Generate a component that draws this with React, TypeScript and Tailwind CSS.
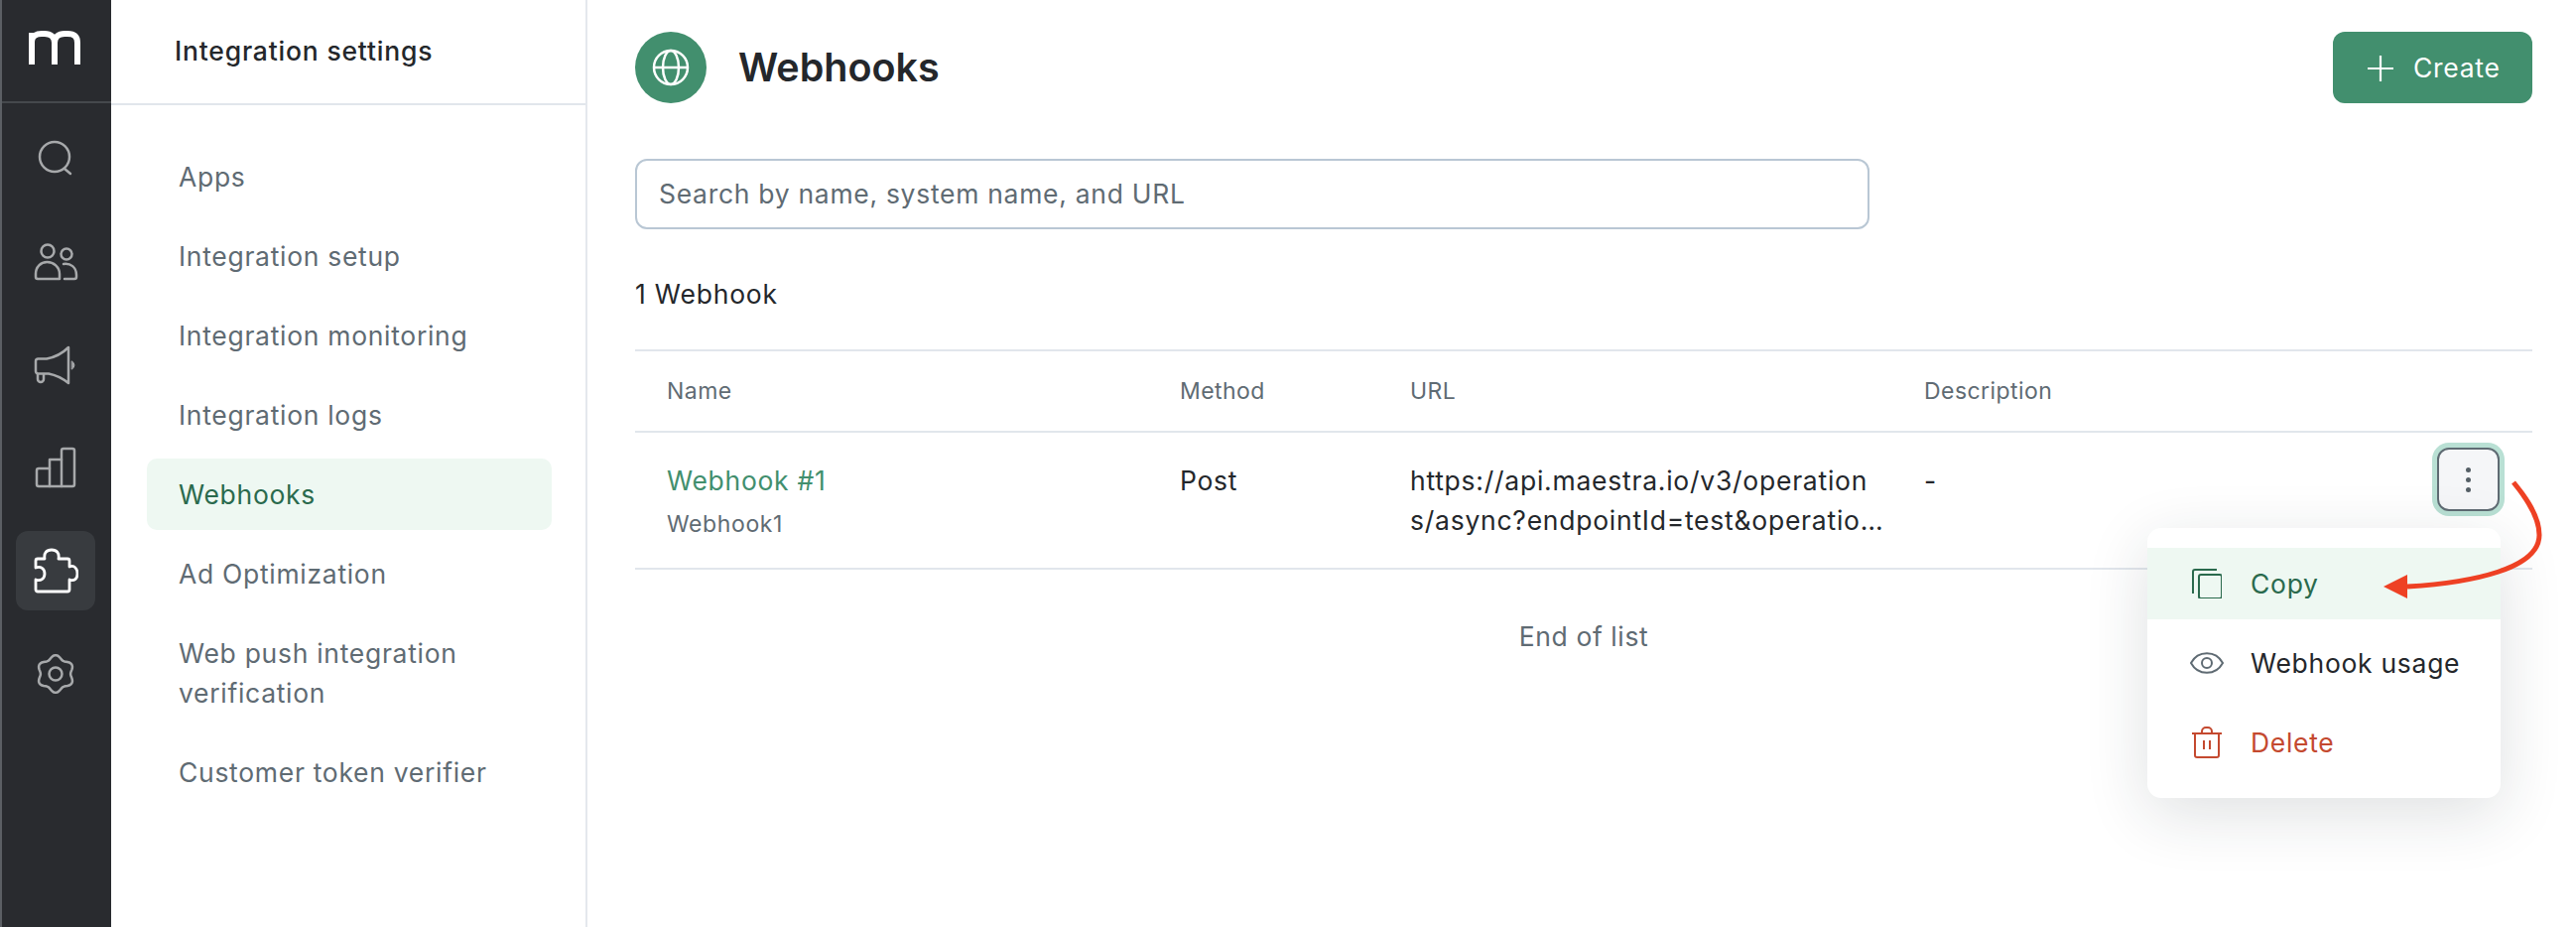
import { ReactNode } from "react";

const NAV = [
  "Apps",
  "Integration setup",
  "Integration monitoring",
  "Integration logs",
  "Webhooks",
  "Ad Optimization",
  "Web push integration verification",
  "Customer token verifier",
];

// wavy six lobe gear outline
function gearPath() {
  const pts: string[] = [];
  for (let i = 0; i < 72; i++) {
    const a = (i / 72) * Math.PI * 2;
    const r = 17 + 1.9 * Math.cos(6 * a);
    const x = 20 + r * Math.sin(a);
    const y = 20 - r * Math.cos(a);
    pts.push(`${i === 0 ? "M" : "L"}${x.toFixed(2)} ${y.toFixed(2)}`);
  }
  return pts.join(" ") + " Z";
}

function RailIcon({ active, children }: { active?: boolean; children: ReactNode }) {
  return (
    <div className={`flex h-[80px] w-[80px] items-center justify-center rounded-[12px] ${active ? "bg-[#383b3f]" : ""}`}>
      {children}
    </div>
  );
}

function Rail() {
  const common = { fill: "none", stroke: "#a7a9ab", strokeWidth: 2.5, strokeLinecap: "round" as const, strokeLinejoin: "round" as const };
  return (
    <aside className="flex w-[112px] shrink-0 flex-col border-l-2 border-[#5b5f64] bg-[#292b2f]">
      <div className="flex h-[104px] items-center justify-center border-b-2 border-[#45484c] pb-[6px] pr-[4px]">
        <svg width="54" height="36" viewBox="0 0 54 36" fill="none" stroke="#fff" strokeWidth="6">
          <path d="M4 35 V3 M4 12 C4 6 9 4 14 4 H17 C23 4 27 7 27 13 V35 M27 13 C27 7 31 4 37 4 H40 C47 4 50 7 50 13 V35" />
        </svg>
      </div>
      <div className="flex flex-col items-center gap-[24px] pr-[2px] pt-[15px]">
        <RailIcon>
          <svg width="36" height="36" viewBox="0 0 36 36" {...common}>
            <circle cx="17" cy="17" r="15" />
            <path d="M27 29 L33 34" />
          </svg>
        </RailIcon>
        <RailIcon>
          <svg className="mt-[2px]" width="46" height="38" viewBox="0 0 46 38" {...common}>
            <circle cx="15" cy="8" r="6.5" />
            <circle cx="34" cy="11" r="5.5" />
            <path d="M3 31 C3 24 8 19 14.5 19 C21 19 27 24 27 31 V36 H5 A2 2 0 0 1 3 34 Z" />
            <path d="M31 21 C38 20 44 24 44 32 V34 A2 2 0 0 1 42 36 H32" />
          </svg>
        </RailIcon>
        <RailIcon>
          <svg className="mt-[2px]" width="44" height="40" viewBox="0 0 44 40" {...common}>
            <path d="M35 2 C29 8 21 12 13 13.5 H4.5 A2.5 2.5 0 0 0 2 16 V26 A2.5 2.5 0 0 0 4.5 28.5 H15 C23 30 30 34 35 38 Z" />
            <path d="M4 29 V34 A3 3 0 0 0 10 34 V29" />
            <path d="M38.5 16 A4.5 4.5 0 0 1 38.5 24 Z" fill="#a7a9ab" strokeWidth="1" />
          </svg>
        </RailIcon>
        <RailIcon>
          <svg width="42" height="42" viewBox="0 0 42 42" {...common}>
            <path d="M15 40 H4 A2 2 0 0 1 2 38 V24 A2 2 0 0 1 4 22 H15 V13 H27 V4 A2 2 0 0 1 29 2 H38 A2 2 0 0 1 40 4 V38 A2 2 0 0 1 38 40 H15 Z" />
            <path d="M15 22 V40 M27 13 V40" />
          </svg>
        </RailIcon>
        <RailIcon active>
          <svg width="46" height="46" viewBox="0 0 46 46" fill="none" stroke="#fff" strokeWidth="2.8" strokeLinejoin="round">
            <path d="M3 13 A2 2 0 0 1 5 11 H12 C11 5 14 2 19 2 C24 2 27 5 26 11 H35 A2 2 0 0 1 37 13 V19 C42 17 45 21 45 26 C45 31 42 34 37 32 V42 A2 2 0 0 1 35 44 H5 A2 2 0 0 1 3 42 V32 C8 34 12 31 12 26 C12 21 8 18 3 20 Z" />
          </svg>
        </RailIcon>
        <RailIcon>
          <svg width="40" height="40" viewBox="0 0 40 40" {...common}>
            <path d={gearPath()} />
            <circle cx="20" cy="20" r="6.5" />
          </svg>
        </RailIcon>
      </div>
    </aside>
  );
}

function SettingsNav() {
  return (
    <nav className="w-[480px] shrink-0 border-r-2 border-[#e4e8ed]">
      <div className="flex h-[106px] items-center border-b-2 border-[#e1e6ec] pl-[64px] text-[26.5px] font-medium tracking-[0.8px] text-[#24272b]">
        Integration settings
      </div>
      <ul className="flex flex-col gap-[8px] pl-[36px] pr-[34px] pt-[36px] tracking-[0.7px]">
        {NAV.map((item) => (
          <li
            key={item}
            className={`rounded-[10px] px-[32px] py-[16px] text-[26.5px] leading-[40px] ${
              item === "Webhooks" ? "bg-[#eef8f2] text-[#2a6a4d]" : "text-[#5f6b73]"
            }`}
          >
            {item}
          </li>
        ))}
      </ul>
    </nav>
  );
}

function ActionMenu() {
  return (
    <div className="absolute right-[32px] top-[96px] z-10 w-[356px] rounded-[14px] bg-white py-[20px] text-[26.5px] leading-[40px] tracking-[0.7px] shadow-[0_16px_64px_rgba(30,40,50,0.14)]">
      <div className="flex flex-col gap-[8px]">
        <div className="flex h-[72px] items-center gap-[29px] bg-[#eef8f2] pl-[45px] text-[#2a6a4d]">
          <svg width="30" height="30" viewBox="0 0 30 30" fill="none" stroke="currentColor" strokeWidth="2">
            <rect x="7" y="6" width="23" height="24" rx="2" />
            <path d="M1 25 V3 A2 2 0 0 1 3 1 H25" />
          </svg>
          Copy
        </div>
        <div className="flex h-[72px] items-center gap-[27px] pl-[43px] text-[#24272b]">
          <svg width="34" height="24" viewBox="0 0 34 24" fill="none" stroke="#5f6b73" strokeWidth="2">
            <path d="M1 12 C8 -1 26 -1 33 12 C26 25 8 25 1 12 Z" />
            <circle cx="17" cy="12" r="5" />
          </svg>
          Webhook usage
        </div>
        <div className="flex h-[72px] items-center gap-[29px] pl-[45px] text-[#c4492f]">
          <svg width="30" height="32" viewBox="0 0 30 32" fill="none" stroke="currentColor" strokeWidth="2">
            <path d="M0 7 H30 M3 7 V29 A2 2 0 0 0 5 31 H25 A2 2 0 0 0 27 29 V7" />
            <path d="M10 7 V5 A4 4 0 0 1 14 1 H16 A4 4 0 0 1 20 5 V7" />
            <path d="M12 14 V23 M18 14 V23" />
          </svg>
          Delete
        </div>
      </div>
    </div>
  );
}

function TableRow() {
  return (
    <div className="relative grid grid-cols-[517px_232px_518px_1fr] border-b-2 border-[#e1e6ec] pb-[24px] pl-[32px] pt-[28px] text-[26.5px] leading-[40px] tracking-[0.7px] text-[#24272b]">
      <div>
        <div className="text-[#428f6e]">Webhook #1</div>
        <div className="mt-[4px] text-[23px] tracking-[0.6px] text-[#5f6b73]">Webhook1</div>
      </div>
      <div>Post</div>
      <div className="line-clamp-2 w-[482px] break-all tracking-[0.75px]">
        https://api.maestra.io/v3/operations/async?endpointId=test&amp;operationName=Webhook1&amp;deviceUUID=1
      </div>
      <div>-</div>
      <button
        type="button"
        className="absolute right-[33px] top-[15px] flex h-[64px] w-[63px] flex-col items-center justify-center gap-[5px] rounded-[12px] border-2 border-[#5f6b73] bg-[#f5f6f8] ring-[5px] ring-[#b9e0d4]"
      >
        <span className="h-[5px] w-[5px] rounded-full bg-[#555f66]" />
        <span className="h-[5px] w-[5px] rounded-full bg-[#555f66]" />
        <span className="h-[5px] w-[5px] rounded-full bg-[#555f66]" />
      </button>
      <ActionMenu />
      {/* red annotation arrow */}
      <svg className="absolute top-0 z-20" width="190" height="180" viewBox="0 0 190 180" fill="none" style={{ right: -20 }}>
        <path d="M151 50 C165 67 177 85 177 103 C177 137 110 151 44 155" stroke="#ee4124" strokeWidth="5" />
        <path d="M20 155 L44 143 L44 167 Z" fill="#ee4124" />
      </svg>
    </div>
  );
}

export default function App() {
  return (
    <div className="flex h-[934px] w-full overflow-hidden bg-white font-[Inter,sans-serif] text-[#24272b]">
      <Rail />
      <SettingsNav />
      <main className="min-w-0 flex-1 pl-[48px] pr-[44px] pt-[32px]">
        <header className="flex h-[72px] items-center">
          <div className="flex h-[72px] w-[72px] items-center justify-center rounded-full bg-[#428f6e]">
            <svg width="38" height="38" viewBox="0 0 38 38" fill="none" stroke="#fff" strokeWidth="2.5">
              <circle cx="19" cy="19" r="17" />
              <ellipse cx="19" cy="19" rx="8" ry="17" />
              <path d="M2 19 H36" />
            </svg>
          </div>
          <h1 className="ml-[32px] pt-[2px] text-[39.5px] font-semibold text-[#24272b]">Webhooks</h1>
          <button type="button" className="ml-auto flex h-[72px] w-[201px] items-center gap-[20px] rounded-[12px] bg-[#428f6e] pl-[35px] pt-[1px] text-[26.5px] tracking-[0.7px] text-white">
            <svg width="26" height="26" viewBox="0 0 26 26" stroke="#fff" strokeWidth="2.2">
              <path d="M13 0 V26 M0 13 H26" />
            </svg>
            Create
          </button>
        </header>
        <div className="mt-[56px] flex h-[71px] w-[1244px] items-center rounded-[12px] border-2 border-[#b9c7d4] pl-[22px] pt-[1px] text-[26.5px] tracking-[0.7px] text-[#5f6b73]">
          Search by name, system name, and URL
        </div>
        <div className="mt-[45px] text-[26.5px] leading-[40px] tracking-[0.8px]">1 Webhook</div>
        <section className="mt-[36px] border-t-2 border-[#e1e6ec]">
          <div className="grid h-[82px] grid-cols-[517px_232px_518px_1fr] items-center border-b-2 border-[#e1e6ec] pl-[32px] text-[23px] tracking-[0.45px] text-[#5f6b73]">
            <div>Name</div>
            <div>Method</div>
            <div>URL</div>
            <div>Description</div>
          </div>
          <TableRow />
        </section>
        <p className="mt-[47px] text-center text-[26.5px] leading-[40px] tracking-[0.6px] text-[#5f6b73]">End of list</p>
      </main>
    </div>
  );
}
